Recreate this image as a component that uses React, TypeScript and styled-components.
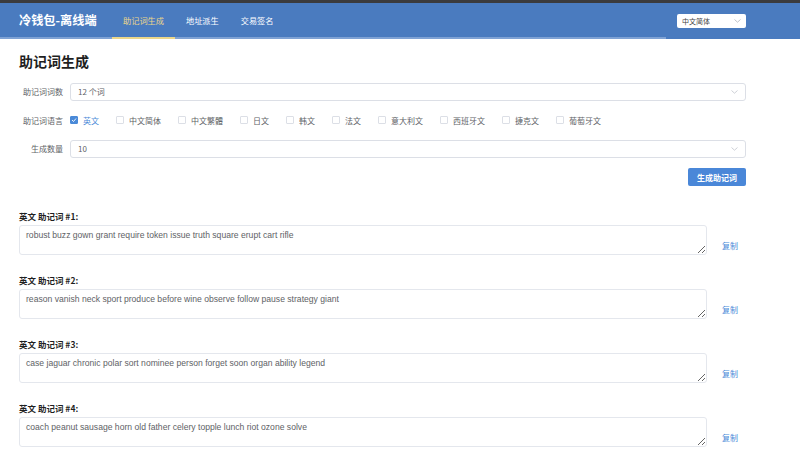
import { useState } from "react";
import styled, { createGlobalStyle } from "styled-components";

const GlobalStyle = createGlobalStyle`
  html, body {
    margin: 0;
    padding: 0;
    background: #ffffff;
    font-family: "Noto Sans CJK SC", "Noto Sans", "Liberation Sans", sans-serif;
  }
`;

const TopStrip = styled.div`
  height: 3px;
  background: #3b3b3d;
`;

const Header = styled.header`
  display: flex;
  height: 36px;
  background: #4a7bbf;
`;

const MenuBar = styled.div`
  flex: 1;
  display: flex;
  align-items: stretch;
  border-bottom: 2px solid #7fa2d4;
`;

const Brand = styled.div`
  display: flex;
  align-items: center;
  padding: 0 19px;
  width: 74px;
  color: #ffffff;
  font-size: 12.2px;
  font-weight: 700;
  white-space: nowrap;
`;

const NavItem = styled.div<{ $active?: boolean }>`
  display: flex;
  align-items: center;
  padding: 0 11px;
  margin-bottom: -2px;
  font-size: 8.2px;
  color: ${(p) => (p.$active ? "#ecd78a" : "#ffffff")};
  border-bottom: 2px solid ${(p) => (p.$active ? "#ecd78a" : "transparent")};
`;

const HeaderRight = styled.div`
  width: 134px;
  display: flex;
  align-items: center;
`;

const LangSelect = styled.div`
  width: 69px;
  height: 14px;
  margin-left: 11px;
  box-sizing: border-box;
  background: #ffffff;
  border-radius: 2px;
  display: flex;
  align-items: center;
  justify-content: space-between;
  padding: 0 5px;
  font-size: 7px;
  color: #444;
`;

const Content = styled.main`
  padding: 0 54px 0 19px;
`;

const Title = styled.h1`
  margin: 13px 0 12.5px;
  font-size: 14px;
  font-weight: 700;
  color: #1f1f1f;
  line-height: 18px;
`;

const FormRow = styled.div`
  display: flex;
  align-items: center;
  height: 18px;
  margin-bottom: 10.5px;
`;

const Label = styled.div`
  width: 51px;
  box-sizing: border-box;
  padding-right: 7px;
  text-align: right;
  font-size: 8px;
  color: #606266;
  white-space: nowrap;
`;

const SelectBox = styled.div`
  flex: 1;
  height: 18px;
  box-sizing: border-box;
  border: 1px solid #dcdfe6;
  border-radius: 3px;
  display: flex;
  align-items: center;
  justify-content: space-between;
  padding: 0 7px;
  font-size: 8px;
  color: #606266;
`;

const CheckGroup = styled.div`
  display: flex;
  align-items: center;
`;

const CheckItem = styled.label<{ $checked?: boolean }>`
  display: flex;
  align-items: center;
  gap: 5px;
  margin-right: 17px;
  font-size: 8px;
  color: ${(p) => (p.$checked ? "#4a8ad8" : "#606266")};
  cursor: pointer;
`;

const Box = styled.span<{ $checked?: boolean }>`
  width: 8px;
  height: 8px;
  box-sizing: border-box;
  border-radius: 1px;
  border: 1px solid ${(p) => (p.$checked ? "#4a8ad8" : "#dcdfe6")};
  background: ${(p) => (p.$checked ? "#4a8ad8" : "#ffffff")};
  display: flex;
  align-items: center;
  justify-content: center;
`;

const ActionRow = styled.div`
  display: flex;
  justify-content: flex-end;
  margin-top: 1px;
`;

const PrimaryButton = styled.button`
  width: 58px;
  height: 18px;
  border: none;
  border-radius: 2px;
  background: #4a87d8;
  color: #ffffff;
  font-family: inherit;
  font-size: 8px;
  font-weight: 700;
  padding: 0;
  cursor: pointer;
`;

const Results = styled.section`
  margin-top: 25px;
`;

const ResultBlock = styled.div`
  margin-bottom: 20px;
`;

const ResultLabel = styled.div`
  font-size: 8.5px;
  font-weight: 700;
  color: #1f1f1f;
  line-height: 10px;
  margin-bottom: 4px;
`;

const ResultRow = styled.div`
  display: flex;
  align-items: flex-end;
`;

const Phrase = styled.textarea`
  flex: 1;
  height: 30px;
  box-sizing: border-box;
  border: 1px solid #e4e7ed;
  border-radius: 3px;
  padding: 4px 6px;
  font-family: "Liberation Sans", "Noto Sans", sans-serif;
  font-size: 8.6px;
  color: #606266;
  resize: vertical;
  outline: none;
`;

const CopyLink = styled.button`
  width: 39px;
  box-sizing: border-box;
  padding: 0 0 4px 15px;
  border: none;
  background: none;
  text-align: left;
  font-family: inherit;
  font-size: 8px;
  color: #4a8ad8;
  cursor: pointer;
`;

const Chevron = ({ color = "#c0c4cc" }: { color?: string }) => (
  <svg width="7" height="4" viewBox="0 0 7 4">
    <path d="M0.5 0.5 L3.5 3.2 L6.5 0.5" fill="none" stroke={color} strokeWidth="0.8" />
  </svg>
);

const languages = [
  "英文",
  "中文简体",
  "中文繁體",
  "日文",
  "韩文",
  "法文",
  "意大利文",
  "西班牙文",
  "捷克文",
  "葡萄牙文",
];

const phrases = [
  "robust buzz gown grant require token issue truth square erupt cart rifle",
  "reason vanish neck sport produce before wine observe follow pause strategy giant",
  "case jaguar chronic polar sort nominee person forget soon organ ability legend",
  "coach peanut sausage horn old father celery topple lunch riot ozone solve",
];

export default function App() {
  const [checked, setChecked] = useState<string[]>(["英文"]);

  const toggle = (lang: string) =>
    setChecked((prev) =>
      prev.includes(lang) ? prev.filter((l) => l !== lang) : [...prev, lang]
    );

  return (
    <>
      <GlobalStyle />
      <TopStrip />
      <Header>
        <MenuBar>
          <Brand>冷钱包-离线端</Brand>
          <NavItem $active>助记词生成</NavItem>
          <NavItem>地址派生</NavItem>
          <NavItem>交易签名</NavItem>
        </MenuBar>
        <HeaderRight>
          <LangSelect>
            中文简体
            <Chevron color="#b0b4bc" />
          </LangSelect>
        </HeaderRight>
      </Header>

      <Content>
        <Title>助记词生成</Title>

        <FormRow>
          <Label>助记词词数</Label>
          <SelectBox>
            12 个词
            <Chevron />
          </SelectBox>
        </FormRow>

        <FormRow>
          <Label>助记词语言</Label>
          <CheckGroup>
            {languages.map((lang) => {
              const on = checked.includes(lang);
              return (
                <CheckItem key={lang} $checked={on} onClick={() => toggle(lang)}>
                  <Box $checked={on}>
                    {on && (
                      <svg width="6" height="6" viewBox="0 0 6 6">
                        <path d="M1 3 L2.5 4.5 L5 1.5" fill="none" stroke="#fff" strokeWidth="0.9" />
                      </svg>
                    )}
                  </Box>
                  {lang}
                </CheckItem>
              );
            })}
          </CheckGroup>
        </FormRow>

        <FormRow>
          <Label>生成数量</Label>
          <SelectBox>
            10
            <Chevron />
          </SelectBox>
        </FormRow>

        <ActionRow>
          <PrimaryButton>生成助记词</PrimaryButton>
        </ActionRow>

        <Results>
          {phrases.map((p, i) => (
            <ResultBlock key={i}>
              <ResultLabel>英文 助记词 #{i + 1}:</ResultLabel>
              <ResultRow>
                <Phrase readOnly value={p} />
                <CopyLink>复制</CopyLink>
              </ResultRow>
            </ResultBlock>
          ))}
        </Results>
      </Content>
    </>
  );
}
